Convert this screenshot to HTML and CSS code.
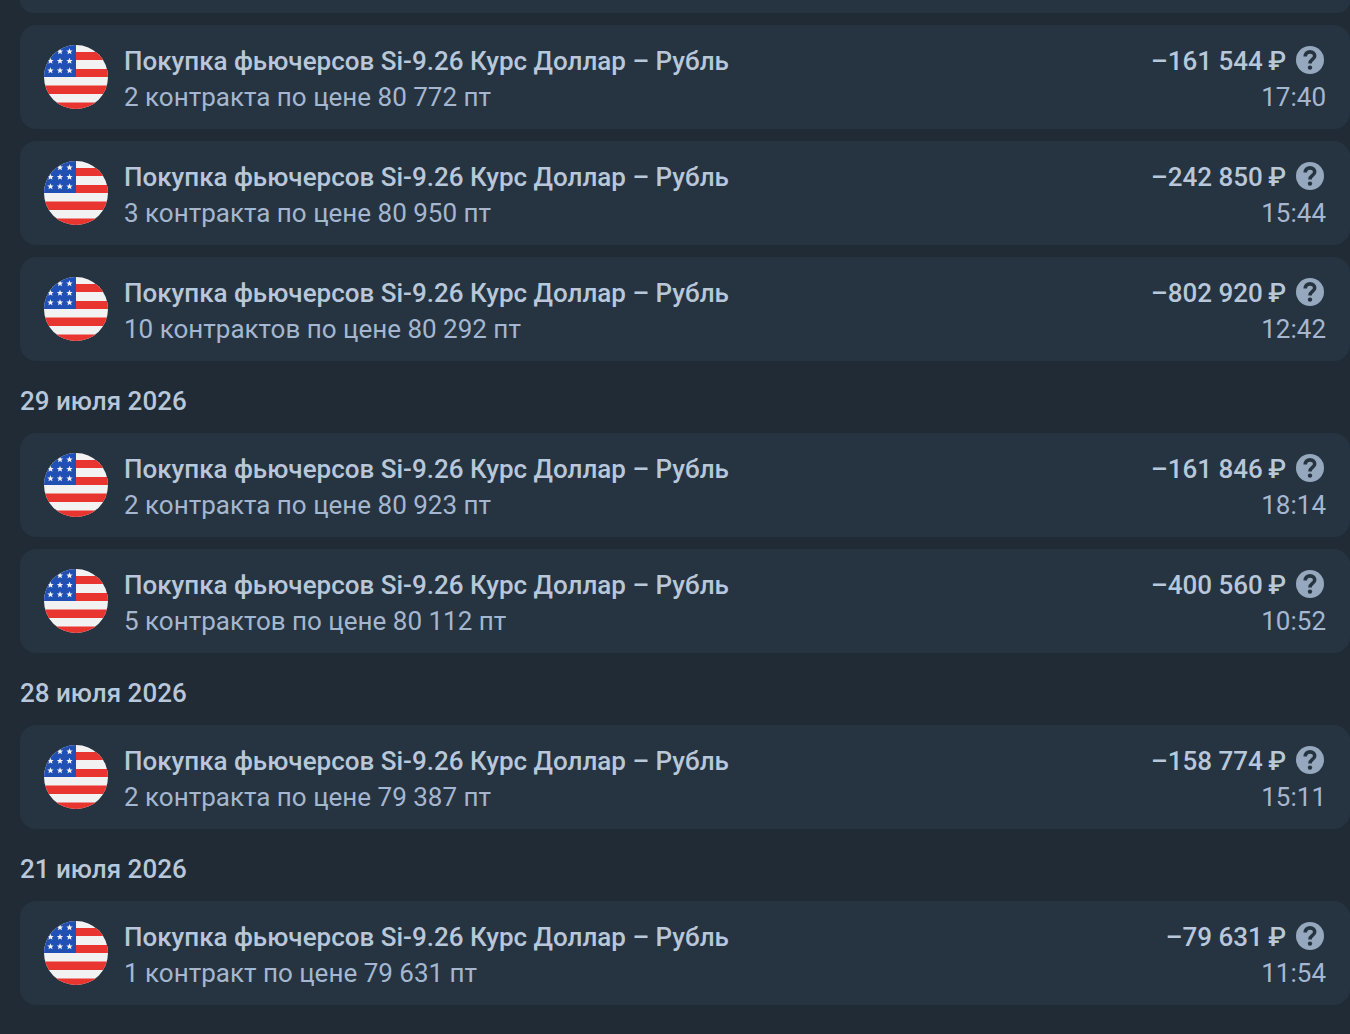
FILE: index.html
```html
<!DOCTYPE html>
<html lang="ru">
<head>
    <meta charset="UTF-8">
    <meta name="viewport" content="width=device-width, initial-scale=1.0">
    <title>История операций</title>
    <link rel="stylesheet" href="styles.css">
</head>
<body>
    <svg class="sprite" aria-hidden="true">
        <path id="star" d="M0-3.300.9-1 3.200-1 1.400.5 2 2.800 0 1.500-2 2.800-1.400.5-3.200-1-.9-1z"/>
        <symbol id="flag" viewBox="0 0 64 64">
            <rect width="64" height="64" fill="#f3f2f3"/>
            <path d="M32 7h32v8H32zM32 24h32v8H32zM0 40.500h64v8.500H0zM0 57.500h64V64H0z" fill="#e8352f"/>
            <rect width="32" height="32" fill="#2150b5"/>
            <g fill="#f3f2f3">
                <use href="#star" x="16" y="6.500"/>
                <use href="#star" x="25.500" y="6.500"/>
                <use href="#star" x="6.500" y="16"/>
                <use href="#star" x="16" y="16"/>
                <use href="#star" x="25.500" y="16"/>
                <use href="#star" x="6.500" y="25.500"/>
                <use href="#star" x="16" y="25.500"/>
                <use href="#star" x="25.500" y="25.500"/>
            </g>
        </symbol>
        <symbol id="help" viewBox="0 0 32 32">
            <circle cx="16" cy="15" r="14" fill="#96a8bd"/>
            <path d="M11.200 11.600C11.200 8.700 13.200 6.900 16 6.900c2.900 0 4.700 1.700 4.700 4.100 0 3.500-4.700 3.400-4.700 7.400" fill="none" stroke="#263441" stroke-width="3.600"/>
            <circle cx="16" cy="22.600" r="2.200" fill="#263441"/>
        </symbol>
    </svg>

    <main class="operations">
        <div class="card card-cut"></div>

        <article class="card">
            <svg class="flag"><use href="#flag"/></svg>
            <div class="info">
                <div class="title">Покупка фьючерсов Si-9.26 Курс Доллар – Рубль</div>
                <div class="details">2 контракта по цене 80 772 пт</div>
            </div>
            <div class="payment">
                <div class="amount">–161 544&thinsp;₽ <button class="help" aria-label="Подробнее"><svg><use href="#help"/></svg></button></div>
                <time class="details">17:40</time>
            </div>
        </article>

        <article class="card">
            <svg class="flag"><use href="#flag"/></svg>
            <div class="info">
                <div class="title">Покупка фьючерсов Si-9.26 Курс Доллар – Рубль</div>
                <div class="details">3 контракта по цене 80 950 пт</div>
            </div>
            <div class="payment">
                <div class="amount">–242 850&thinsp;₽ <button class="help" aria-label="Подробнее"><svg><use href="#help"/></svg></button></div>
                <time class="details">15:44</time>
            </div>
        </article>

        <article class="card">
            <svg class="flag"><use href="#flag"/></svg>
            <div class="info">
                <div class="title">Покупка фьючерсов Si-9.26 Курс Доллар – Рубль</div>
                <div class="details">10 контрактов по цене 80 292 пт</div>
            </div>
            <div class="payment">
                <div class="amount">–802 920&thinsp;₽ <button class="help" aria-label="Подробнее"><svg><use href="#help"/></svg></button></div>
                <time class="details">12:42</time>
            </div>
        </article>

        <h2>29 июля 2026</h2>

        <article class="card">
            <svg class="flag"><use href="#flag"/></svg>
            <div class="info">
                <div class="title">Покупка фьючерсов Si-9.26 Курс Доллар – Рубль</div>
                <div class="details">2 контракта по цене 80 923 пт</div>
            </div>
            <div class="payment">
                <div class="amount">–161 846&thinsp;₽ <button class="help" aria-label="Подробнее"><svg><use href="#help"/></svg></button></div>
                <time class="details">18:14</time>
            </div>
        </article>

        <article class="card">
            <svg class="flag"><use href="#flag"/></svg>
            <div class="info">
                <div class="title">Покупка фьючерсов Si-9.26 Курс Доллар – Рубль</div>
                <div class="details">5 контрактов по цене 80 112 пт</div>
            </div>
            <div class="payment">
                <div class="amount">–400 560&thinsp;₽ <button class="help" aria-label="Подробнее"><svg><use href="#help"/></svg></button></div>
                <time class="details">10:52</time>
            </div>
        </article>

        <h2>28 июля 2026</h2>

        <article class="card">
            <svg class="flag"><use href="#flag"/></svg>
            <div class="info">
                <div class="title">Покупка фьючерсов Si-9.26 Курс Доллар – Рубль</div>
                <div class="details">2 контракта по цене 79 387 пт</div>
            </div>
            <div class="payment">
                <div class="amount">–158 774&thinsp;₽ <button class="help" aria-label="Подробнее"><svg><use href="#help"/></svg></button></div>
                <time class="details">15:11</time>
            </div>
        </article>

        <h2>21 июля 2026</h2>

        <article class="card">
            <svg class="flag"><use href="#flag"/></svg>
            <div class="info">
                <div class="title">Покупка фьючерсов Si-9.26 Курс Доллар – Рубль</div>
                <div class="details">1 контракт по цене 79 631 пт</div>
            </div>
            <div class="payment">
                <div class="amount">–79 631&thinsp;₽ <button class="help" aria-label="Подробнее"><svg><use href="#help"/></svg></button></div>
                <time class="details">11:54</time>
            </div>
        </article>
    </main>
</body>
</html>
```
FILE: styles.css
```css
body {
    margin: 0;
    background-color: #202b36;
    color: #b8c7d9;
    font-family: Roboto, "Noto Sans", sans-serif;
    font-size: 26px;
    line-height: 36px;
}

.sprite {
    display: none;
}

.operations {
    padding-left: 20px;
}

.card {
    display: flex;
    align-items: center;
    gap: 16px;
    padding: 14px 24px;
    margin-bottom: 12px;
    border-radius: 16px;
    background-color: #263441;
}

/* end of the previous operation, scrolled out of view */
.card-cut {
    height: 13px;
    padding: 0;
    border-radius: 0 0 16px 16px;
}

.flag {
    width: 64px;
    height: 64px;
    flex-shrink: 0;
    border-radius: 50%;
}

.info,
.payment {
    padding-top: 4px;
}

.info {
    flex: 1;
}

.title,
.amount,
h2 {
    font-weight: 500;
}

.details {
    color: #a5b7d0;
}

.payment {
    display: flex;
    flex-direction: column;
    align-items: flex-end;
    white-space: nowrap;
}

.amount {
    display: flex;
    align-items: center;
    gap: 8px;
}

.help {
    width: 32px;
    height: 32px;
    padding: 0;
    border: none;
    background: none;
    cursor: pointer;
}

.help svg {
    display: block;
    width: 32px;
    height: 32px;
}

h2 {
    margin: 0;
    padding: 10px 0 14px;
    font-size: 26px;
    line-height: 36px;
}
```
